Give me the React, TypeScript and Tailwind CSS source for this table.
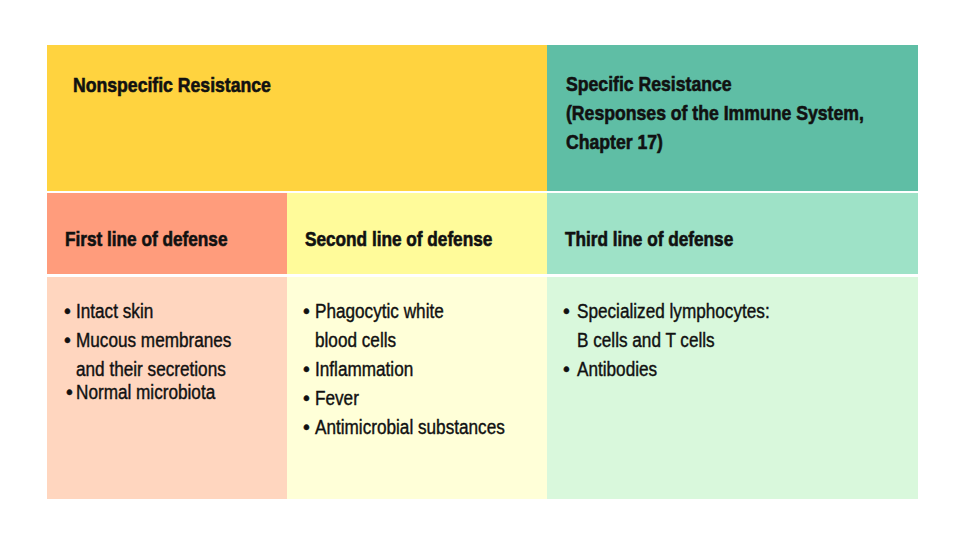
import React from "react";

const font = { fontFamily: '"Liberation Sans", Arial, sans-serif' };

function H({ children }: { children: React.ReactNode }) {
  return (
    <div className="whitespace-nowrap">
      <span className="inline-block origin-left scale-x-[0.86]">{children}</span>
    </div>
  );
}

function Bullet({ children, cont, w = "w-[12px]" }: { children: React.ReactNode; cont?: boolean; w?: string }) {
  return (
    <div className="flex whitespace-nowrap">
      <span className={`${w} shrink-0`}>{cont ? "" : "•"}</span>
      <span className="inline-block origin-left scale-x-[0.88]">{children}</span>
    </div>
  );
}

export default function App() {
  return (
    <div className="w-[960px] h-[540px] bg-white pt-[45px] pl-[47px] text-[#111]" style={font}>
      <div className="flex w-[871px] h-[146px] text-[20.5px] leading-[29px] font-bold [-webkit-text-stroke:0.6px_#111]">
        <div className="w-[500px] bg-[#FFD33F] pl-[26px] pt-[25px]">
          <H>Nonspecific Resistance</H>
        </div>
        <div className="w-[371px] bg-[#5FBEA5] pl-[19px] pt-[24px]">
          <H>Specific Resistance</H>
          <H>(Responses of the Immune System,</H>
          <H>Chapter 17)</H>
        </div>
      </div>
      <div className="flex w-[871px] h-[81px] mt-[2px] text-[20px] leading-[24px] font-bold [-webkit-text-stroke:0.6px_#111]">
        <div className="w-[240px] bg-[#FF9C7C] pl-[18px] pt-[34px]"><H>First line of defense</H></div>
        <div className="w-[260px] bg-[#FFFB9A] pl-[18px] pt-[34px]"><H>Second line of defense</H></div>
        <div className="w-[371px] bg-[#9EE2C7] pl-[18px] pt-[34px]"><H>Third line of defense</H></div>
      </div>
      <div className="flex w-[871px] h-[222px] mt-[3px] text-[19.5px] leading-[29px] [-webkit-text-stroke:0.4px_#111]">
        <div className="w-[240px] bg-[#FFD6BF] pl-[17px] pt-[20px]">
          <Bullet>Intact skin</Bullet>
          <Bullet>Mucous membranes</Bullet>
          <Bullet cont>and their secretions</Bullet>
          <div className="-mt-[6px] pl-[2px]">
            <Bullet w="w-[10px]">Normal microbiota</Bullet>
          </div>
        </div>
        <div className="w-[260px] bg-[#FFFFD8] pl-[16px] pt-[20px]">
          <Bullet>Phagocytic white</Bullet>
          <Bullet cont>blood cells</Bullet>
          <Bullet>Inflammation</Bullet>
          <Bullet>Fever</Bullet>
          <Bullet>Antimicrobial substances</Bullet>
        </div>
        <div className="w-[371px] bg-[#D9F8DC] pl-[16px] pt-[20px]">
          <Bullet w="w-[14px]">Specialized lymphocytes:</Bullet>
          <Bullet w="w-[14px]" cont>B cells and T cells</Bullet>
          <Bullet w="w-[14px]">Antibodies</Bullet>
        </div>
      </div>
    </div>
  );
}
